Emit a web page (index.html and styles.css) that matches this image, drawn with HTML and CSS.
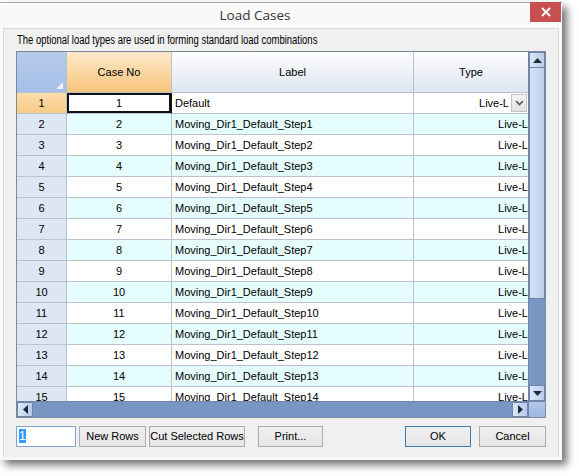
FILE: index.html
```html
<!DOCTYPE html>
<html>
<head>
<meta charset="utf-8">
<link rel="stylesheet" href="styles.css">
</head>
<body>
<div class="window">
  <div class="titlebar">
    <div class="title">Load Cases</div>
    <div class="close"><svg width="10" height="10" viewBox="0 0 10 10"><path d="M1 1L9 9M9 1L1 9" stroke="#fff" stroke-width="1.8"/></svg></div>
  </div>
  <div class="client">
    <div class="desc"><span class="desc-text">The optional load types are used in forming standard load combinations</span></div>
    <div class="grid">
      <div class="cells">
        <div class="row head">
          <div class="c rh corner"><span class="tri"></span></div>
          <div class="c cn hsel">Case No</div>
          <div class="c lb">Label</div>
          <div class="c ty">Type</div>
        </div>
        <div class="row">
          <div class="c rh rsel">1</div>
          <div class="c cn cur">1</div>
          <div class="c lb">Default</div>
          <div class="c ty dd"><span>Live-L</span><span class="ddbtn"><svg width="9" height="6" viewBox="0 0 9 6"><path d="M1 1L4.5 4.5L8 1" fill="none" stroke="#555" stroke-width="1.6"/></svg></span></div>
        </div>
        <div class="row alt"><div class="c rh">2</div><div class="c cn">2</div><div class="c lb">Moving_Dir1_Default_Step1</div><div class="c ty">Live-L</div></div>
        <div class="row"><div class="c rh">3</div><div class="c cn">3</div><div class="c lb">Moving_Dir1_Default_Step2</div><div class="c ty">Live-L</div></div>
        <div class="row alt"><div class="c rh">4</div><div class="c cn">4</div><div class="c lb">Moving_Dir1_Default_Step3</div><div class="c ty">Live-L</div></div>
        <div class="row"><div class="c rh">5</div><div class="c cn">5</div><div class="c lb">Moving_Dir1_Default_Step4</div><div class="c ty">Live-L</div></div>
        <div class="row alt"><div class="c rh">6</div><div class="c cn">6</div><div class="c lb">Moving_Dir1_Default_Step5</div><div class="c ty">Live-L</div></div>
        <div class="row"><div class="c rh">7</div><div class="c cn">7</div><div class="c lb">Moving_Dir1_Default_Step6</div><div class="c ty">Live-L</div></div>
        <div class="row alt"><div class="c rh">8</div><div class="c cn">8</div><div class="c lb">Moving_Dir1_Default_Step7</div><div class="c ty">Live-L</div></div>
        <div class="row"><div class="c rh">9</div><div class="c cn">9</div><div class="c lb">Moving_Dir1_Default_Step8</div><div class="c ty">Live-L</div></div>
        <div class="row alt"><div class="c rh">10</div><div class="c cn">10</div><div class="c lb">Moving_Dir1_Default_Step9</div><div class="c ty">Live-L</div></div>
        <div class="row"><div class="c rh">11</div><div class="c cn">11</div><div class="c lb">Moving_Dir1_Default_Step10</div><div class="c ty">Live-L</div></div>
        <div class="row alt"><div class="c rh">12</div><div class="c cn">12</div><div class="c lb">Moving_Dir1_Default_Step11</div><div class="c ty">Live-L</div></div>
        <div class="row"><div class="c rh">13</div><div class="c cn">13</div><div class="c lb">Moving_Dir1_Default_Step12</div><div class="c ty">Live-L</div></div>
        <div class="row alt"><div class="c rh">14</div><div class="c cn">14</div><div class="c lb">Moving_Dir1_Default_Step13</div><div class="c ty">Live-L</div></div>
        <div class="row"><div class="c rh">15</div><div class="c cn">15</div><div class="c lb">Moving_Dir1_Default_Step14</div><div class="c ty">Live-L</div></div>
      </div>
      <div class="vscroll">
        <div class="sbtn"><svg width="9" height="5" viewBox="0 0 9 5"><path d="M0 5L4.5 0L9 5Z" fill="#1e2a3a"/></svg></div>
        <div class="vthumb"></div>
        <div class="vtrack"></div>
        <div class="sbtn"><svg width="9" height="5" viewBox="0 0 9 5"><path d="M0 0L4.5 5L9 0Z" fill="#1e2a3a"/></svg></div>
      </div>
      <div class="hscroll">
        <div class="sbtn"><svg width="5" height="9" viewBox="0 0 5 9"><path d="M5 0L0 4.5L5 9Z" fill="#1e2a3a"/></svg></div>
        <div class="htrack"></div>
        <div class="sbtn"><svg width="5" height="9" viewBox="0 0 5 9"><path d="M0 0L5 4.5L0 9Z" fill="#1e2a3a"/></svg></div>
      </div>
      <div class="scorner"></div>
    </div>
    <div class="buttons">
      <div class="input"><span class="selected">1</span></div>
      <div class="btn w67">New Rows</div>
      <div class="btn w96">Cut Selected Rows</div>
      <div class="btn w65 ml">Print...</div>
      <div class="spacer"></div>
      <div class="btn w66 def">OK</div>
      <div class="btn w67">Cancel</div>
    </div>
  </div>
</div>
</body>
</html>
```
FILE: styles.css
```css
html, body {
  margin: 0;
  padding: 0;
  background: #ffffff;
}
body {
  width: 579px;
  height: 476px;
  overflow: hidden;
  font-family: "Liberation Sans", Arial, sans-serif;
  font-size: 11px;
  color: #000;
}
.window {
  margin-top: 2px;
  width: 562px;
  height: 458px;
  box-sizing: border-box;
  border-top: 1px solid #a9a9a9;
  background: #f9f9f9;
  box-shadow: 5px 5px 8px rgba(0,0,0,0.55);
  display: flex;
  flex-direction: column;
}
.titlebar {
  height: 25px;
  position: relative;
  display: flex;
  justify-content: center;
  align-items: center;
}
.title {
  font-family: "Open Sans", "Noto Sans", sans-serif;
  font-size: 13.5px;
  color: #333;
  margin-left: -52px;
  margin-top: -2px;
}
.close {
  position: absolute;
  right: 1px;
  top: -1px;
  width: 31px;
  height: 20px;
  background: #c75050;
  display: flex;
  align-items: center;
  justify-content: center;
}
.client {
  margin: 0 3px 3px 3px;
  flex: 1;
  background: #f0f0f0;
  border: 1px solid #dadada;
  border-bottom: none;
  padding: 4px 0 0 12px;
}
.desc {
  height: 18px;
  line-height: 14px;
  padding-left: 1px;
  white-space: nowrap;
}
.desc-text {
  display: inline-block;
  font-size: 12px;
  transform: scaleX(0.79);
  transform-origin: 0 50%;
}
.grid {
  width: 530px;
  height: 367px;
  box-sizing: border-box;
  border: 1px solid #7d8a99;
  display: grid;
  grid-template-columns: 511px 17px;
  grid-template-rows: 349px 16px;
  background: #fff;
}
.cells {
  overflow: hidden;
}
.row {
  display: flex;
  height: 21px;
  background: #fff;
}
.row.alt {
  background: #e6fdfe;
}
.c {
  box-sizing: border-box;
  border-right: 1px solid #b9c3cf;
  border-bottom: 1px solid #b9c3cf;
  line-height: 20px;
  white-space: nowrap;
  overflow: hidden;
  flex: none;
}
.rh { width: 50px; text-align: center; background: #dce6f4; }
.cn { width: 105px; text-align: center; }
.lb { width: 242px; padding-left: 3px; }
.ty { width: 114px; text-align: right; border-right: none; padding-right: 0; }
.row.head {
  height: 41px;
}
.row.head .c {
  line-height: 40px;
  background: linear-gradient(#fdfdfe, #dfe6f1);
  text-align: center;
  padding: 0;
  font-size: 11px;
}
.row.head .c.corner {
  background: linear-gradient(#b4caea, #a5bfe6);
  position: relative;
}
.tri {
  position: absolute;
  right: 3px;
  bottom: 3px;
  width: 0;
  height: 0;
  border-left: 7px solid transparent;
  border-bottom: 7px solid #eef3fb;
}
.row.head .c.hsel {
  background: linear-gradient(#fde9c8, #f7c57b);
}
.c.rsel {
  background: linear-gradient(#fbdcab, #f8cc86);
}
.c.cur {
  background: #fff;
  box-shadow: inset 0 0 0 2px #111;
  border-right-color: #111;
}
.dd {
  display: flex;
  justify-content: flex-end;
  align-items: center;
}
.ddbtn {
  width: 16px;
  height: 18px;
  margin-left: 2px;
  margin-right: 1px;
  box-sizing: border-box;
  border: 1px solid #c3c3c3;
  background: linear-gradient(#f3f3f3, #e2e2e2);
  display: flex;
  align-items: center;
  justify-content: center;
}
.vscroll {
  display: flex;
  flex-direction: column;
  border-left: 1px solid #6f86a8;
  box-sizing: border-box;
}
.sbtn {
  flex: none;
  width: 16px;
  height: 16px;
  box-sizing: border-box;
  border: 1px solid #6f86a8;
  background: linear-gradient(90deg, #dce7f8, #b7cbe9);
  display: flex;
  align-items: center;
  justify-content: center;
}
.vscroll .sbtn { width: 16px; }
.vthumb {
  height: 231px;
  flex: none;
  box-sizing: border-box;
  border: 1px solid #6f86a8;
  border-top: none;
  background: linear-gradient(90deg, #d3e1f6, #c6d8f3 60%, #b9cdee);
}
.vtrack {
  flex: 1;
  background: #7796c3;
}
.hscroll {
  display: flex;
  border-top: 1px solid #6f86a8;
  box-sizing: border-box;
}
.hscroll .sbtn { height: 15px; }
.htrack {
  flex: 1;
  background: #7796c3;
}
.scorner {
  background: linear-gradient(#b4c9ea, #9db7e0);
  border-left: 1px solid #6f86a8;
  border-top: 1px solid #6f86a8;
}
.buttons {
  margin-top: 8px;
  width: 530px;
  height: 21px;
  display: flex;
  gap: 3px;
}
.input {
  width: 60px;
  box-sizing: border-box;
  border: 1px solid #7ea4d6;
  background: #fff;
  padding: 2px 2px;
  font-size: 12px;
  line-height: 15px;
}
.selected {
  background: #3399ff;
  color: #fff;
}
.btn {
  box-sizing: border-box;
  border: 1px solid #acacac;
  background: linear-gradient(#f0f0f0, #e5e5e5);
  text-align: center;
  line-height: 19px;
  font-size: 11px;
  flex: none;
}
.btn.def { border-color: #3c7fb1; }
.w67 { width: 67px; }
.w96 { width: 96px; }
.w65 { width: 65px; }
.w66 { width: 66px; margin-right: 5px; }
.ml { margin-left: 10px; }
.spacer { flex: 1; }
```
